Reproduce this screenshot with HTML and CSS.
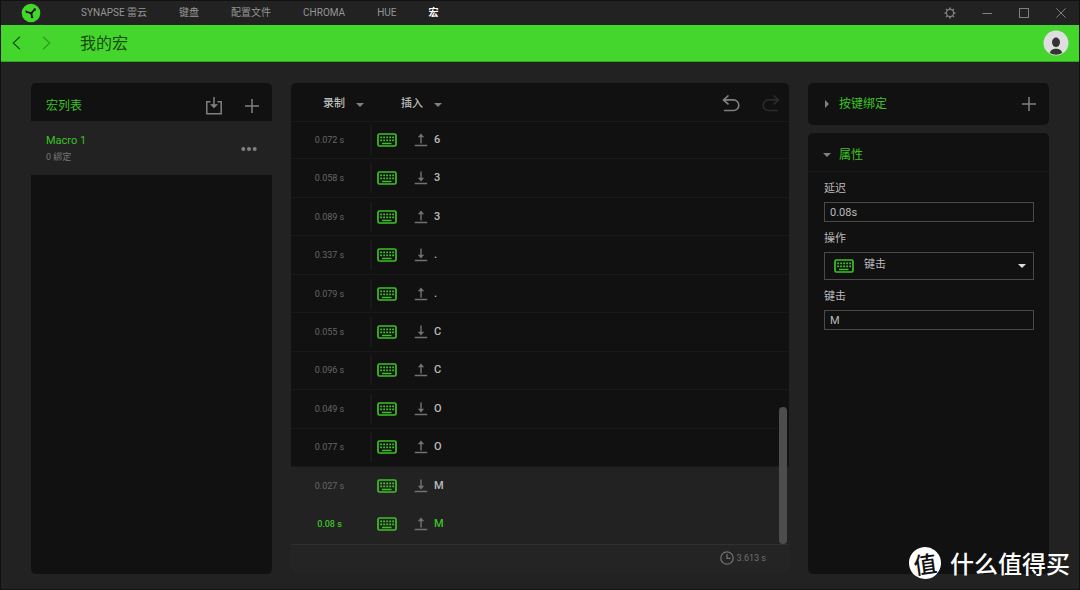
FILE: index.html
```html
<!DOCTYPE html>
<html lang="zh-CN">
<head>
<meta charset="utf-8">
<meta name="viewport" content="width=device-width, initial-scale=1">
<title>我的宏</title>
<link rel="stylesheet" href="styles.css">
</head>
<body>
<svg class="defs" aria-hidden="true">
  <symbol id="keyboard" viewBox="0 0 20 14">
    <rect x="1" y="1" width="18" height="12" rx="1.5" fill="none" stroke="currentColor" stroke-width="1.7"/>
    <path d="M3.2 4.3h13.8M3.2 7.4h13.8" stroke="currentColor" stroke-width="1.8" stroke-dasharray="1.9 1.1"/>
    <path d="M5 10.5h9.5" stroke="currentColor" stroke-width="1.5"/>
  </symbol>
  <symbol id="up" viewBox="0 0 14 14">
    <path d="M.8 12.5h12.4M7 10.5V2" fill="none" stroke="currentColor" stroke-width="1.4"/>
    <path d="M3.8 4.2L7 .4l3.2 3.8z" fill="currentColor"/>
  </symbol>
  <symbol id="down" viewBox="0 0 14 14">
    <path d="M.8 12.5h12.4M7 .6V9" fill="none" stroke="currentColor" stroke-width="1.4"/>
    <path d="M3.8 6.800L7 10.600 10.200 6.800z" fill="currentColor"/>
  </symbol>
  <symbol id="plus" viewBox="0 0 16 16">
    <path d="M8 1v14M1 8h14" stroke="currentColor" stroke-width="1.5"/>
  </symbol>
</svg>
<div class="window">
  <header class="titlebar">
    <svg class="logo" viewBox="0 0 20 20" aria-hidden="true">
      <circle cx="10" cy="10" r="9.3" fill="currentColor"/>
      <g stroke="#151515" stroke-width="1.7" fill="none" stroke-linecap="round" stroke-linejoin="round">
        <path d="M10.3 10.2L5.500 8.800M10.300 10.200L14 6.200M10.300 10.200L11.200 14.500"/>
        <path d="M5 8l.8 1.600M13.200 5.800l1.200 1.200M10.400 14.400l1.500 .1M9 9.800l1.400 1.700L11.300 9.400z" stroke-width="1.200"/>
      </g>
    </svg>
    <nav class="tabs">
      <a href="#synapse">SYNAPSE 雷云</a>
      <a href="#keyboard-tab">键盘</a>
      <a href="#profiles">配置文件</a>
      <a href="#chroma">CHROMA</a>
      <a href="#hue">HUE</a>
      <a href="#macro" class="active" aria-current="page">宏</a>
    </nav>
    <div class="controls">
      <button aria-label="设置"><svg viewBox="0 0 12 12"><circle cx="6" cy="6" r="3.6" fill="none" stroke="currentColor" stroke-width="1.2"/><path d="M6 .5v1.8M6 9.7v1.8M.5 6h1.8M9.7 6h1.8M2.1 2.1l1.2 1.2M8.7 8.7l1.2 1.2M9.9 2.1L8.7 3.3M3.3 8.7L2.1 9.9" stroke="currentColor" stroke-width="1.6"/></svg></button>
      <button aria-label="最小化"><svg viewBox="0 0 12 12"><path d="M1.5 6.5h9.5" stroke="currentColor"/></svg></button>
      <button aria-label="最大化"><svg viewBox="0 0 12 12"><rect x="1.5" y="1.5" width="9" height="9" fill="none" stroke="currentColor"/></svg></button>
      <button aria-label="关闭"><svg viewBox="0 0 12 12"><path d="M1.3 1.3l9.4 9.4M10.7 1.3l-9.4 9.4" stroke="currentColor"/></svg></button>
    </div>
  </header>

  <div class="banner">
    <button class="back" aria-label="后退"><svg viewBox="0 0 9 14"><path d="M8 .8L1.2 7 8 13.2" fill="none" stroke="currentColor" stroke-width="1.2"/></svg></button>
    <button class="forward" aria-label="前进" disabled><svg viewBox="0 0 9 14"><path d="M1 .8L7.8 7 1 13.2" fill="none" stroke="currentColor" stroke-width="1.2"/></svg></button>
    <h1>我的宏</h1>
    <button class="avatar" aria-label="账户"><svg viewBox="0 0 26 26"><circle cx="13" cy="13" r="12.5" fill="#dedede"/><ellipse cx="13" cy="12.3" rx="4" ry="4.8" fill="#333"/><path d="M6.8 23.1C7.6 19.8 10 18.8 13 18.8s5.400 1 6.200 4.300A12.500 12.500 0 0 1 6.800 23.100z" fill="#333"/></svg></button>
  </div>

  <main class="content">
    <section class="panel macros">
      <div class="macros-head">
        <h2>宏列表</h2>
        <button aria-label="导入"><svg class="icon-import" viewBox="0 0 18 18"><path d="M5.500 4.800H1.800V16.700H16.200V4.800H12.500M9 0V9.500" fill="none" stroke="currentColor" stroke-width="1.500"/><path d="M5 7.300h8L9 11.300z" fill="currentColor"/></svg></button>
        <button aria-label="添加宏"><svg class="icon-plus"><use href="#plus"/></svg></button>
      </div>
      <div class="macro">
        <div class="macro-text"><span class="macro-name">Macro 1</span><span class="macro-bind">0 綁定</span></div>
        <button aria-label="更多"><svg class="icon-more" viewBox="0 0 16 4"><circle cx="2.300" cy="2" r="2"/><circle cx="8" cy="2" r="2"/><circle cx="13.700" cy="2" r="2"/></svg></button>
      </div>
    </section>

    <section class="panel editor">
      <div class="toolbar">
        <button class="menu">录制<i class="caret"></i></button>
        <button class="menu">插入<i class="caret"></i></button>
        <span class="spacer"></span>
        <button class="undo" aria-label="撤销"><svg viewBox="0 0 18 18"><path d="M6.500 .5L1.500 4.900 6.500 9.300M1.500 4.900H11.500a5.300 5.300 0 0 1 0 10.600H2" fill="none" stroke="currentColor" stroke-width="1.600"/></svg></button>
        <button class="redo" aria-label="重做" disabled><svg viewBox="0 0 18 18"><path d="M11.500 .5L16.500 4.900 11.500 9.300M16.500 4.900H6.500a5.300 5.300 0 0 0 0 10.600H16" fill="none" stroke="currentColor" stroke-width="1.600"/></svg></button>
      </div>
      <div class="viewport">
        <ol class="events">
          <li><span class="time">0.072 s</span><svg class="kb"><use href="#keyboard"/></svg><svg class="dir"><use href="#up"/></svg><span>6</span></li>
          <li><span class="time">0.058 s</span><svg class="kb"><use href="#keyboard"/></svg><svg class="dir"><use href="#down"/></svg><span>3</span></li>
          <li><span class="time">0.089 s</span><svg class="kb"><use href="#keyboard"/></svg><svg class="dir"><use href="#up"/></svg><span>3</span></li>
          <li><span class="time">0.337 s</span><svg class="kb"><use href="#keyboard"/></svg><svg class="dir"><use href="#down"/></svg><span>.</span></li>
          <li><span class="time">0.079 s</span><svg class="kb"><use href="#keyboard"/></svg><svg class="dir"><use href="#up"/></svg><span>.</span></li>
          <li><span class="time">0.055 s</span><svg class="kb"><use href="#keyboard"/></svg><svg class="dir"><use href="#down"/></svg><span>C</span></li>
          <li><span class="time">0.096 s</span><svg class="kb"><use href="#keyboard"/></svg><svg class="dir"><use href="#up"/></svg><span>C</span></li>
          <li><span class="time">0.049 s</span><svg class="kb"><use href="#keyboard"/></svg><svg class="dir"><use href="#down"/></svg><span>O</span></li>
          <li><span class="time">0.077 s</span><svg class="kb"><use href="#keyboard"/></svg><svg class="dir"><use href="#up"/></svg><span>O</span></li>
          <li class="selected"><span class="time">0.027 s</span><svg class="kb"><use href="#keyboard"/></svg><svg class="dir"><use href="#down"/></svg><span>M</span></li>
          <li class="selected current"><span class="time">0.08 s</span><svg class="kb"><use href="#keyboard"/></svg><svg class="dir"><use href="#up"/></svg><span>M</span></li>
        </ol>
        <div class="thumb"></div>
      </div>
      <div class="total">
        <svg viewBox="0 0 14 14" aria-hidden="true"><circle cx="7" cy="7" r="6.200" fill="none" stroke="currentColor" stroke-width="1.300"/><path d="M7 3v4.300h3.600" fill="none" stroke="currentColor" stroke-width="1.300"/></svg>
        <span>3.613 s</span>
      </div>
    </section>

    <aside class="side">
      <section class="panel binding">
        <i class="caret right"></i><h2>按键绑定</h2>
        <button aria-label="添加绑定"><svg class="icon-plus"><use href="#plus"/></svg></button>
      </section>
      <section class="panel props">
        <div class="props-head"><i class="caret"></i><h2>属性</h2></div>
        <form class="form">
          <label for="delay">延迟</label>
          <input id="delay" type="text" value="0.08s">
          <label for="action">操作</label>
          <div class="select">
            <svg class="kb" aria-hidden="true"><use href="#keyboard"/></svg>
            <select id="action"><option>键击</option></select>
            <i class="caret"></i>
          </div>
          <label for="key">键击</label>
          <input id="key" type="text" value="M">
        </form>
      </section>
    </aside>
  </main>
  <div class="watermark"><span class="badge">值</span><span>什么值得买</span></div>
</div>
</body>
</html>
```
FILE: styles.css
```css
:root {
  --green: #44d62c;
  --green-text: #3cc126;
  --bg: #222;
  --panel: #111;
  --line: #191919;
  --muted: #666;
  --icon: #808080;
  --text: #bbb;
}

* { box-sizing: border-box; }

body {
  margin: 0;
  background: var(--bg);
  color: var(--text);
  font: 11px/16px Roboto, "Noto Sans CJK SC", sans-serif;
}

h1, h2, ol { margin: 0; padding: 0; font-weight: 400; }

svg { display: block; }

.defs { position: absolute; width: 0; height: 0; }

button {
  display: flex;
  align-items: center;
  padding: 0;
  border: 0;
  background: none;
  color: var(--icon);
  font: inherit;
}

.window {
  position: relative;
  display: flex;
  flex-direction: column;
  min-height: 100vh;
  border: 1px solid #111;
}

.titlebar {
  display: flex;
  align-items: center;
  height: 24px;
  padding: 0 12px 0 20px;
}

.logo { width: 20px; height: 20px; color: var(--green); }

.tabs { display: flex; gap: 32px; margin-left: 40px; }

.tabs a { color: #959595; font-size: 10px; text-decoration: none; }

.tabs .active { color: #fff; font-weight: 700; }

.controls { display: flex; gap: 25px; margin-left: auto; }

.controls svg { width: 12px; height: 12px; }

.banner {
  display: flex;
  align-items: center;
  height: 37px;
  padding: 0 10px 0 11px;
  background: var(--green);
  border-bottom: 1px solid #30a51f;
}

.banner .back, .banner .forward { color: #1c5213; }

.banner .forward { margin-left: 21px; color: #319a20; }

.banner .back svg, .banner .forward svg { width: 9px; height: 14px; }

.banner h1 {
  margin-left: 29px;
  padding-top: 2px;
  color: #1b4a13;
  font-size: 16px;
  line-height: 24px;
}

.avatar { margin-left: auto; }

.avatar svg { width: 26px; height: 26px; }

.content {
  flex: 1;
  display: grid;
  grid-template-columns: 241px minmax(0, 1fr) 241px;
  gap: 19px;
  padding: 21px 30px 15px;
}

.panel { background: var(--panel); border-radius: 5px; }

.panel h2 { color: var(--green-text); font-size: 12px; line-height: 18px; }

.icon-plus { width: 16px; height: 16px; }

.macros-head {
  display: flex;
  align-items: center;
  height: 38px;
  padding: 8px 12px 0 15px;
}

.macros-head h2 { margin-right: auto; }

.macros-head button + button { margin-left: 21px; }

.icon-import { width: 18px; height: 18px; }

.macro {
  display: flex;
  align-items: center;
  justify-content: space-between;
  height: 54px;
  padding: 1px 15px 0;
  background: var(--bg);
}

.macro-text { display: flex; flex-direction: column; }

.macro-name { color: var(--green-text); }

.macro-bind { color: #777; font-size: 9px; }

.icon-more { width: 16px; height: 4px; fill: var(--icon); }

.editor { display: flex; flex-direction: column; overflow: hidden; }

.toolbar {
  display: flex;
  align-items: center;
  height: 39px;
  padding: 3px 9px 0 32px;
  border-bottom: 1px solid var(--line);
}

.menu { gap: 11px; color: var(--text); font-weight: 500; }

.menu .caret { margin-top: 3px; }

.menu + .menu { margin-left: 37px; }

.spacer { flex: 1; }

.toolbar svg { width: 18px; height: 18px; }

.redo { margin-left: 22px; color: #2b2b2b; }

.caret {
  border: 4px solid transparent;
  border-top-color: var(--icon);
  border-bottom: 0;
}

.caret.right {
  border: 4px solid transparent;
  border-left-color: var(--icon);
  border-right: 0;
}

.viewport { position: relative; flex: 1; overflow: hidden; }

/* The list is scrolled, so the first row starts just above the viewport. */
.events {
  display: grid;
  grid-auto-rows: 1fr;
  height: calc(100% + 1px);
  margin-top: -1px;
  list-style: none;
}

.events li {
  display: flex;
  align-items: center;
  min-height: 36px;
  border-bottom: 1px solid var(--line);
  font-weight: 500;
}

.time {
  display: flex;
  align-items: center;
  justify-content: center;
  width: 81px;
  height: 30px;
  padding-right: 2px;
  border-right: 2px solid var(--line);
  color: var(--muted);
  font-size: 9px;
  font-weight: 400;
}

.kb { width: 20px; height: 14px; color: var(--green-text); }

.events .kb { margin-left: 5px; }

.dir { width: 14px; height: 14px; margin: 0 6px 0 17px; color: #727272; }

.events .selected { background: var(--bg); border-color: var(--bg); }

.selected .time { border-color: var(--bg); }

.current, .current .time { color: var(--green-text); }

.current .time { font-weight: 500; }

.thumb {
  position: absolute;
  right: 2px;
  bottom: 0;
  width: 8px;
  height: 137px;
  border-radius: 4px;
  background: #4d4d4d;
}

.total {
  display: flex;
  align-items: center;
  justify-content: flex-end;
  gap: 3px;
  height: 30px;
  padding: 0 23px 3px 0;
  background: #242424;
  border-top: 1px solid #303030;
  color: #707070;
  font-size: 9px;
}

.total svg { width: 14px; height: 14px; }

.side { display: flex; flex-direction: column; gap: 8px; }

.binding {
  display: flex;
  align-items: center;
  gap: 10px;
  height: 42px;
  padding: 0 12px 0 17px;
}

.binding button { margin-left: auto; }

.props { flex: 1; }

.props-head {
  display: flex;
  align-items: center;
  gap: 8px;
  height: 39px;
  padding: 5px 15px 0;
  border-bottom: 1px solid var(--line);
}

.form { display: flex; flex-direction: column; padding: 8px 15px 8px 16px; }

.form label { margin-bottom: 4px; line-height: 18px; }

.form input, .form select {
  width: 100%;
  height: 20px;
  padding: 0 5px;
  border: 1px solid #4a4a4a;
  border-radius: 0;
  background: var(--panel);
  color: var(--text);
  font: inherit;
}

.form input, .form .select { margin-bottom: 8px; }

.select { position: relative; }

.form select { height: 28px; padding: 0 39px 2px; appearance: none; }

.select .kb { position: absolute; left: 10px; top: 7px; }

.select .caret {
  position: absolute;
  right: 8px;
  top: 12px;
  border-top-color: #ddd;
}

.watermark {
  position: absolute;
  right: 9px;
  bottom: 10px;
  display: flex;
  align-items: center;
  gap: 9px;
  color: #fff;
  font: 500 24px/32px "Noto Sans CJK SC", sans-serif;
}

.badge {
  width: 32px;
  height: 32px;
  border-radius: 50%;
  background: #fff;
  color: #111;
  font-size: 23px;
  text-align: center;
  transform: rotate(-8deg);
}
```
